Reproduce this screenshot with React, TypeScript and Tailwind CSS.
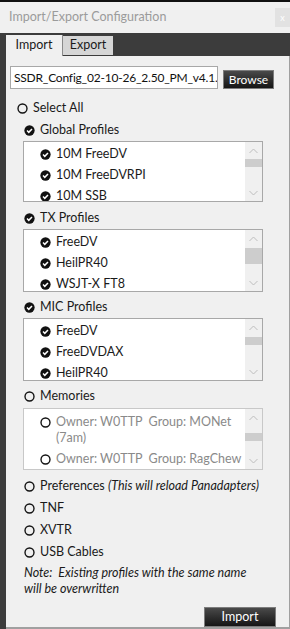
const font = { fontFamily: 'Lato, "Noto Sans", sans-serif' };

function Check() {
  return (
    <svg width="11" height="11" viewBox="0 0 12 12" className="shrink-0">
      <circle cx="6" cy="6" r="5.6" fill="#111" />
      <polyline points="3.3,6.1 5.2,8 8.7,4.3" fill="none" stroke="#fff" strokeWidth="1.6" />
    </svg>
  );
}

function Radio() {
  return (
    <svg width="11" height="11" viewBox="0 0 12 12" className="shrink-0">
      <circle cx="6" cy="6" r="4.9" fill="none" stroke="#111" strokeWidth="1.5" />
    </svg>
  );
}

function Chevron({ up }: { up?: boolean }) {
  return (
    <svg width="9" height="6" viewBox="0 0 9 6">
      <polyline
        points={up ? "0.5,5 4.5,1 8.5,5" : "0.5,1 4.5,5 8.5,1"}
        fill="none"
        stroke="#bdbdbd"
        strokeWidth="1"
      />
    </svg>
  );
}

function ScrollBar({ offset, size }: { offset: number; size: number }) {
  return (
    <div className="w-[17px] bg-[#f0f0f0] flex flex-col">
      <div className="h-[17px] flex items-center justify-center">
        <Chevron up />
      </div>
      <div className="flex-1">
        <div className="bg-[#cdcdcd] w-full" style={{ marginTop: offset, height: size }} />
      </div>
      <div className="h-[17px] flex items-center justify-center">
        <Chevron />
      </div>
    </div>
  );
}

function ListBox({
  items,
  height,
  offset,
  size,
}: {
  items: string[];
  height: number;
  offset: number;
  size: number;
}) {
  return (
    <div
      className="ml-[17px] w-[240px] bg-white border border-[#a8a8a8] flex overflow-hidden"
      style={{ height }}
    >
      <div className="flex-1 pt-[2px] pl-[16px]">
        {items.map((t) => (
          <div key={t} className="h-[21px] flex items-center gap-[5px] text-[12.5px] text-[#1a1a1a]">
            <Check />
            <span>{t}</span>
          </div>
        ))}
      </div>
      <ScrollBar offset={offset} size={size} />
    </div>
  );
}

function Row({ icon, children, indent = 18 }: { icon: "check" | "radio"; children: React.ReactNode; indent?: number }) {
  return (
    <div className="h-[20px] flex items-center gap-[5px] text-[12.5px] text-[#1a1a1a]" style={{ paddingLeft: indent }}>
      {icon === "check" ? <Check /> : <Radio />}
      {children}
    </div>
  );
}

export default function App() {
  return (
    <div className="w-[290px] h-[629px] bg-[#3c3c3c] flex flex-col overflow-hidden" style={font}>
      <div className="h-[2px] bg-[#111]" />
      {/* title bar */}
      <div className="h-[31px] bg-[#f0f0f0] flex items-center justify-between pl-[9px]">
        <span className="text-[12.5px] text-[#9b9b9b]">Import/Export Configuration</span>
        <div className="w-[15px] h-[19px] bg-[#e2e2e2] flex items-center justify-center text-[9px] text-white">x</div>
      </div>

      {/* tabs */}
      <div className="h-[23px] flex items-end pl-[6px]">
        <div className="w-[57px] h-[21px] bg-[#f0f0f0] flex items-center justify-center text-[12.5px] text-[#1a1a1a] border-r border-[#8a8a8a]">
          Import
        </div>
        <div className="w-[50px] h-[19px] mb-[1px] bg-[#d6d6d6] flex items-center justify-center text-[12.5px] text-[#1a1a1a]">
          Export
        </div>
      </div>

      {/* panel */}
      <div className="flex-1 ml-[6px] bg-[#f0f0f0] border-r border-b-2 border-[#a0a0a0] flex flex-col pt-[10px]">
        <div className="flex items-end pl-[4px] gap-[5px]">
          <div className="w-[208px] h-[23px] bg-white border border-[#a8a8a8] flex items-center pl-[3px] text-[12px] tracking-[-0.2px] text-[#111] whitespace-nowrap overflow-hidden">
            SSDR_Config_02-10-26_2.50_PM_v4.1.
          </div>
          <button className="w-[51px] h-[19px] bg-gradient-to-b from-[#4a4a4a] to-[#161616] border border-[#7c7c7c] text-white text-[12px] flex items-center justify-center leading-none">
            Browse
          </button>
        </div>

        <div className="mt-[9px]">
          <Row icon="radio" indent={11}>Select All</Row>
        </div>

        <div className="mt-[2px]">
          <Row icon="check">Global Profiles</Row>
        </div>
        <div className="mt-[1px]">
          <ListBox items={["10M FreeDV", "10M FreeDVRPI", "10M SSB"]} height={61} offset={0} size={8} />
        </div>

        <div className="mt-[6px]">
          <Row icon="check">TX Profiles</Row>
        </div>
        <div className="mt-[1px]">
          <ListBox items={["FreeDV", "HeilPR40", "WSJT-X FT8"]} height={63} offset={1} size={16} />
        </div>

        <div className="mt-[5px]">
          <Row icon="check">MIC Profiles</Row>
        </div>
        <div className="mt-[1px]">
          <ListBox items={["FreeDV", "FreeDVDAX", "HeilPR40"]} height={63} offset={1} size={8} />
        </div>

        <div className="mt-[5px]">
          <Row icon="radio">Memories</Row>
        </div>
        <div className="mt-[2px]">
          <div className="ml-[17px] w-[240px] h-[62px] bg-white border border-[#c8c8c8] flex overflow-hidden">
            <div className="flex-1 pt-[5px] pl-[16px] text-[12.5px] text-[#8a8a8a] leading-[16px]">
              <div className="flex items-start gap-[5px]">
                <div className="h-[16px] flex items-center">
                  <Radio />
                </div>
                <span className="whitespace-pre">
                  Owner: W0TTP  Group: MONet
                  <br />
                  (7am)
                </span>
              </div>
              <div className="flex items-start gap-[5px] mt-[5px]">
                <div className="h-[16px] flex items-center">
                  <Radio />
                </div>
                <span className="whitespace-pre">Owner: W0TTP  Group: RagChew</span>
              </div>
            </div>
            <ScrollBar offset={7} size={8} />
          </div>
        </div>

        <div className="mt-[6px]">
          <Row icon="radio">
            <span>
              Preferences <span className="italic">(This will reload Panadapters)</span>
            </span>
          </Row>
        </div>
        <div className="mt-[2px]">
          <Row icon="radio">TNF</Row>
        </div>
        <div className="mt-[2px]">
          <Row icon="radio">XVTR</Row>
        </div>
        <div className="mt-[2px]">
          <Row icon="radio">USB Cables</Row>
        </div>

        <div className="pl-[18px] mt-[3px] italic text-[12.5px] leading-[16px] text-[#1a1a1a] whitespace-pre">
          Note:  Existing profiles with the same name
          <br />
          will be overwritten
        </div>

        <div className="flex justify-end pr-[13px] mt-[10px]">
          <button className="w-[72px] h-[20px] bg-gradient-to-b from-[#4a4a4a] to-[#161616] border border-[#7c7c7c] text-white text-[12.5px] flex items-center justify-center leading-none">
            Import
          </button>
        </div>
      </div>
    </div>
  );
}
